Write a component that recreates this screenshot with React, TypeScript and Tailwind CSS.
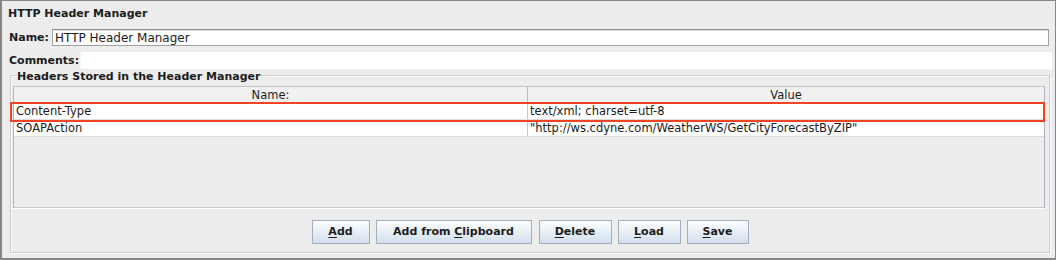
const FONT = "font-['DejaVu_Sans',sans-serif]"

const BUTTONS = [
  { pre: "", key: "A", post: "dd", width: "w-[58px]" },
  { pre: "Add from ", key: "C", post: "lipboard", width: "w-[156px]" },
  { pre: "", key: "D", post: "elete", width: "w-[73px] ml-[1px]" },
  { pre: "", key: "L", post: "oad", width: "w-[63px]" },
  { pre: "", key: "S", post: "ave", width: "w-[62px]" },
] as const

const ROWS = [
  { name: "Content-Type", value: "text/xml; charset=utf-8" },
  { name: "SOAPAction", value: '"http://ws.cdyne.com/WeatherWS/GetCityForecastByZIP"' },
] as const

export default function App() {
  return (
    <div
      className={`relative h-[260px] w-[1056px] overflow-hidden border-t border-r border-b-2 border-l-2 border-[#878787] bg-[#ededed] text-[#1c1c1c] ${FONT}`}
    >
      {/* Title */}
      <div className="h-[22px] pl-[6px] pt-[6px] text-[11px] font-bold leading-[14px]">
        HTTP Header Manager
      </div>

      {/* Name */}
      <div className="mt-[6px] flex h-[17px] items-center">
        <span className="w-[50px] pl-[7px] pt-[2px] text-[11px] font-bold">Name:</span>
        <div className="mr-[6px] flex h-[17px] flex-1 items-center border border-[#a3a3a3] border-t-[#8e8e8e] bg-white pl-[2px] pt-[1px] text-[12px] shadow-[inset_0_1px_0_#dcdcdc]">
          HTTP Header Manager
        </div>
      </div>

      {/* Comments */}
      <div className="mt-[6px] flex h-[17px] items-center">
        <span className="w-[78px] pl-[7px] pt-[2px] text-[11px] font-bold">Comments:</span>
        <div className="mr-[3px] h-[17px] flex-1 border-l border-[#f4f4f4] bg-white" />
      </div>

      {/* Group box */}
      <div className="relative mt-[6px] ml-[8px] mr-[5px] h-[178px] border border-[#cfcfcf] shadow-[inset_1px_1px_0_#fafafa,1px_1px_0_#fafafa]">
        <span className="absolute -top-[5px] left-[5px] bg-[#ededed] px-[1px] text-[11px] font-bold leading-[12px]">
          Headers Stored in the Header Manager
        </span>

        {/* Table pane */}
        <div className="mt-[10px] ml-[2px] mr-[4px] flex h-[122px] flex-col border-r border-l border-b border-l-[#b4b4b4] border-r-[#aab0c2] border-b-[#c9c9c9] border-t border-t-[#c4c4c4] shadow-[0_1px_0_#ffffff]">
          <div className="flex h-[16px] border-b border-[#a9a9a9] bg-[#f1f1f1] text-[11.5px] leading-[17px]">
            <div className="w-[514px] border-r border-[#bdbdbd] text-center">Name:</div>
            <div className="flex-1 text-center">Value</div>
          </div>
          {ROWS.map((row) => (
            <div key={row.name} className="flex h-[17px] border-b border-[#dcdcdc] bg-white text-[11.5px] leading-[17px]">
              <div className="w-[514px] border-r border-[#c6c6c6] pl-[2px]">{row.name}</div>
              <div className="flex-1 pl-[2px]">{row.value}</div>
            </div>
          ))}
        </div>

        {/* Buttons */}
        <div className="mt-[12px] flex justify-center gap-[6px]">
          {BUTTONS.map((b) => (
            <button
              key={b.key}
              className={`${b.width} h-[24px] border border-[#a2aec0] bg-gradient-to-b from-[#fdfeff] to-[#d3dfec] text-[11px] font-bold text-[#1c1c1c]`}
            >
              {b.pre}
              <span className="underline underline-offset-2">{b.key}</span>
              {b.post}
            </button>
          ))}
        </div>
      </div>

      {/* Highlight annotation */}
      <div className="pointer-events-none absolute left-[8px] top-[101px] h-[20px] w-[1035px] border-2 border-[#ef4423]" />
    </div>
  )
}
